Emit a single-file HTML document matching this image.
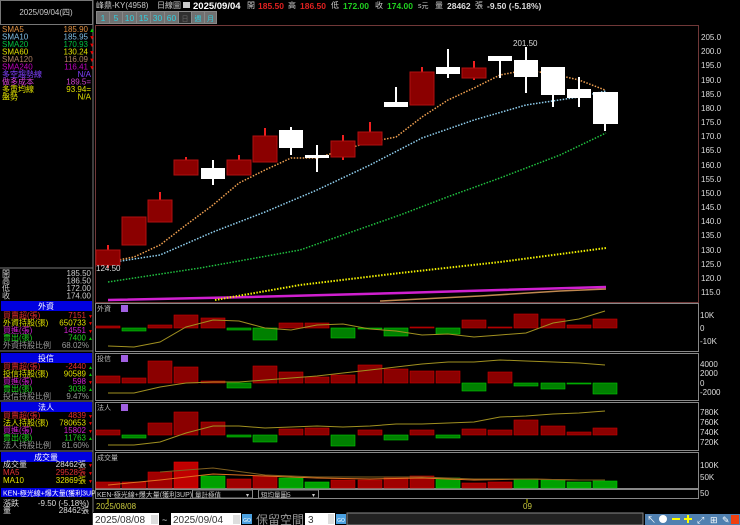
<!DOCTYPE html>
<html><head><meta charset="utf-8"><style>
html,body{margin:0;padding:0;background:#000;width:740px;height:525px;overflow:hidden}
svg{display:block;font-family:"Liberation Sans","Noto Sans CJK TC",sans-serif}
</style></head><body>
<svg width="740" height="525" viewBox="0 0 740 525" xmlns="http://www.w3.org/2000/svg">
<rect width="740" height="525" fill="#000"/>
<!-- left panel borders -->
<rect x="0.5" y="0.5" width="92" height="24" fill="#000" stroke="#777"/>
<text x="46" y="15" fill="#ccc" font-size="8" text-anchor="middle">2025/09/04(四)</text>
<line x1="93" y1="0" x2="93" y2="525" stroke="#777"/>
<g font-size="8">
<text x="2" y="32" fill="#e09040">SMA5</text><text x="88" y="32" fill="#e09040" text-anchor="end">185.90</text><text x="89" y="32" fill="#0c0" font-size="6">▲</text>
<text x="2" y="39.5" fill="#80c0e8">SMA10</text><text x="88" y="39.5" fill="#80c0e8" text-anchor="end">185.95</text><text x="89" y="39.5" fill="#e00" font-size="6">▼</text>
<text x="2" y="47" fill="#00c040">SMA20</text><text x="88" y="47" fill="#00c040" text-anchor="end">170.93</text><text x="89" y="47" fill="#e00" font-size="6">▼</text>
<text x="2" y="54.5" fill="#e0e000">SMA60</text><text x="88" y="54.5" fill="#e0e000" text-anchor="end">130.24</text><text x="89" y="54.5" fill="#e00" font-size="6">▼</text>
<text x="2" y="62" fill="#b08060">SMA120</text><text x="88" y="62" fill="#b08060" text-anchor="end">116.09</text><text x="89" y="62" fill="#e00" font-size="6">▼</text>
<text x="2" y="69.5" fill="#c000c0">SMA240</text><text x="88" y="69.5" fill="#c000c0" text-anchor="end">116.41</text><text x="89" y="69.5" fill="#e00" font-size="6">▼</text>
<text x="2" y="77" fill="#8040ff">多空趨勢線</text><text x="91" y="77" fill="#8040ff" text-anchor="end">N/A</text>
<text x="2" y="84.5" fill="#d040d0">做多成本</text><text x="91" y="84.5" fill="#d040d0" text-anchor="end">189.5=</text>
<text x="2" y="92" fill="#e0e000">多重均線</text><text x="91" y="92" fill="#e0e000" text-anchor="end">93.94=</text>
<text x="2" y="99.5" fill="#e0e000">盤勢</text><text x="91" y="99.5" fill="#e0e000" text-anchor="end">N/A</text>
</g>
<line x1="0" y1="268" x2="93" y2="268" stroke="#777"/>
<g font-size="8" fill="#ccc">
<text x="2" y="276">開</text><text x="91" y="276" text-anchor="end">185.50</text>
<text x="2" y="283.5">高</text><text x="91" y="283.5" text-anchor="end">186.50</text>
<text x="2" y="291">低</text><text x="91" y="291" text-anchor="end">172.00</text>
<text x="2" y="298.5">收</text><text x="91" y="298.5" text-anchor="end">174.00</text>
</g>
<!-- institutional tables -->
<g font-size="8">
<rect x="1" y="301" width="91" height="10" fill="#0000e0"/><text x="46" y="309" fill="#fff" text-anchor="middle">外資</text>
<text x="3" y="318" fill="#e03030">買賣超(張)</text><text x="86" y="318" fill="#e03030" text-anchor="end">7151</text>
<text x="3" y="325.5" fill="#e0e000">外資持股(張)</text><text x="86" y="325.5" fill="#e0e000" text-anchor="end">650733</text>
<text x="3" y="333" fill="#d020d0">買進(張)</text><text x="86" y="333" fill="#d020d0" text-anchor="end">14551</text>
<text x="3" y="340.5" fill="#20d020">賣出(張)</text><text x="86" y="340.5" fill="#20d020" text-anchor="end">7400</text>
<text x="3" y="348" fill="#999">外資持股比例</text><text x="89" y="348" fill="#999" text-anchor="end">68.02%</text>
<line x1="0" y1="351" x2="93" y2="351" stroke="#777"/>
<rect x="1" y="353" width="91" height="10" fill="#0000e0"/><text x="46" y="361" fill="#fff" text-anchor="middle">投信</text>
<text x="3" y="369" fill="#e03030">買賣超(張)</text><text x="86" y="369" fill="#e03030" text-anchor="end">-2440</text>
<text x="3" y="376.5" fill="#e0e000">投信持股(張)</text><text x="86" y="376.5" fill="#e0e000" text-anchor="end">90589</text>
<text x="3" y="384" fill="#d020d0">買進(張)</text><text x="86" y="384" fill="#d020d0" text-anchor="end">598</text>
<text x="3" y="391.5" fill="#20d020">賣出(張)</text><text x="86" y="391.5" fill="#20d020" text-anchor="end">3038</text>
<text x="3" y="399" fill="#999">投信持股比例</text><text x="89" y="399" fill="#999" text-anchor="end">9.47%</text>
<line x1="0" y1="401" x2="93" y2="401" stroke="#777"/>
<rect x="1" y="402" width="91" height="10" fill="#0000e0"/><text x="46" y="410" fill="#fff" text-anchor="middle">法人</text>
<text x="3" y="418" fill="#e03030">買賣超(張)</text><text x="86" y="418" fill="#e03030" text-anchor="end">4839</text>
<text x="3" y="425.5" fill="#e0e000">法人持股(張)</text><text x="86" y="425.5" fill="#e0e000" text-anchor="end">780653</text>
<text x="3" y="433" fill="#d020d0">買進(張)</text><text x="86" y="433" fill="#d020d0" text-anchor="end">15802</text>
<text x="3" y="440.5" fill="#20d020">賣出(張)</text><text x="86" y="440.5" fill="#20d020" text-anchor="end">11763</text>
<text x="3" y="448" fill="#999">法人持股比例</text><text x="89" y="448" fill="#999" text-anchor="end">81.60%</text>
<line x1="0" y1="451" x2="93" y2="451" stroke="#777"/>
<rect x="1" y="452" width="91" height="10" fill="#0000e0"/><text x="46" y="460" fill="#fff" text-anchor="middle">成交量</text>
<text x="3" y="467" fill="#ddd">成交量</text><text x="86" y="467" fill="#ddd" text-anchor="end">28462張</text>
<text x="3" y="475" fill="#e03030">MA5</text><text x="86" y="475" fill="#e03030" text-anchor="end">29528張</text>
<text x="3" y="483" fill="#e0e000">MA10</text><text x="86" y="483" fill="#e0e000" text-anchor="end">32869張</text>
<rect x="1" y="488" width="91" height="9" fill="#0000e0"/><text x="3" y="495.5" fill="#fff" font-size="7">KEN-極光線+爆大量(獲利3UP)</text>
<text x="3" y="506" fill="#ddd">漲跌</text><text x="89" y="506" fill="#ddd" text-anchor="end">-9.50 (-5.18%)</text>
<text x="3" y="513" fill="#ddd">量</text><text x="89" y="513" fill="#ddd" text-anchor="end">28462張</text>
</g>
<g font-size="5" fill="#e00"><text x="88" y="318">▼</text><text x="88" y="325">▼</text><text x="88" y="333">▼</text><text x="88" y="340" fill="#0c0">▲</text>
<text x="88" y="369" fill="#0c0">▲</text><text x="88" y="376" fill="#0c0">▲</text><text x="88" y="384">▼</text><text x="88" y="391" fill="#0c0">▲</text>
<text x="88" y="418">▼</text><text x="88" y="425">▼</text><text x="88" y="433">▼</text><text x="88" y="440" fill="#0c0">▲</text>
<text x="88" y="467">▼</text><text x="88" y="475">▼</text><text x="88" y="483">▼</text></g>

<!-- top header -->
<g font-size="8.5">
<text x="96" y="8" fill="#ccc" font-size="8">峰鼎-KY(4958)</text>
<text x="157" y="8" fill="#ccc" font-size="8">日線圖</text>
<rect x="183" y="2" width="7" height="6" fill="#ccc"/>
<text x="193" y="9" fill="#fff" font-weight="bold" font-size="9.5">2025/09/04</text>
<text x="247" y="8" fill="#ccc" font-size="8">開</text><text x="258" y="9" fill="#e02020" font-weight="bold">185.50</text>
<text x="288" y="8" fill="#ccc" font-size="8">高</text><text x="300" y="9" fill="#e02020" font-weight="bold">186.50</text>
<text x="331" y="8" fill="#ccc" font-size="8">低</text><text x="343" y="9" fill="#20d020" font-weight="bold">172.00</text>
<text x="375" y="8" fill="#ccc" font-size="8">收</text><text x="387" y="9" fill="#20d020" font-weight="bold">174.00</text>
<text x="418" y="8" fill="#ccc" font-size="7">s元</text>
<text x="435" y="8" fill="#ccc" font-size="8">量</text><text x="447" y="9" fill="#ddd" font-weight="bold">28462</text><text x="475" y="8" fill="#ccc" font-size="8">張</text>
<text x="487" y="9" fill="#ddd" font-weight="bold">-9.50 (-5.18%)</text>
</g>
<g font-size="8.5" fill="#30d0e0" text-anchor="middle">
<rect x="96" y="11" width="121" height="13" fill="#888"/>
<rect x="97" y="12" width="12" height="11" fill="#707070"/><text x="103" y="21">1</text>
<rect x="110" y="12" width="12" height="11" fill="#707070"/><text x="116" y="21">5</text>
<rect x="123" y="12" width="13" height="11" fill="#707070"/><text x="129.5" y="21">10</text>
<rect x="137" y="12" width="13" height="11" fill="#707070"/><text x="143.5" y="21">15</text>
<rect x="151" y="12" width="13" height="11" fill="#707070"/><text x="157.5" y="21">30</text>
<rect x="165" y="12" width="13" height="11" fill="#707070"/><text x="171.5" y="21">60</text>
<rect x="179" y="12" width="12" height="11" fill="#303030"/><text x="185" y="21" fill="#666" font-size="7">日</text>
<rect x="192" y="12" width="12" height="11" fill="#707070"/><text x="198" y="21" font-size="7">週</text>
<rect x="205" y="12" width="11" height="11" fill="#707070"/><text x="210.5" y="21" font-size="7">月</text>
</g>

<!-- main chart frame -->
<rect x="95.5" y="25.5" width="603" height="277" fill="none" stroke="#703838"/>
<g font-size="8" fill="#ddd">
<text x="701" y="40">205.0</text><text x="701" y="54">200.0</text><text x="701" y="68">195.0</text><text x="701" y="83">190.0</text><text x="701" y="97">185.0</text><text x="701" y="111">180.0</text><text x="701" y="125">175.0</text><text x="701" y="139">170.0</text><text x="701" y="153">165.0</text><text x="701" y="168">160.0</text><text x="701" y="182">155.0</text><text x="701" y="196">150.0</text><text x="701" y="210">145.0</text><text x="701" y="224">140.0</text><text x="701" y="238">135.0</text><text x="701" y="253">130.0</text><text x="701" y="267">125.0</text><text x="701" y="281">120.0</text><text x="701" y="295">115.0</text>
</g>
<!-- MA lines -->
<polyline points="108,300 250,297 400,293 500,290 606,287" fill="none" stroke="#d020d0" stroke-width="2.5"/>
<polyline points="380,301 480,296 560,291 606,289" fill="none" stroke="#c08850" stroke-width="1.5"/>
<polyline points="215,300 300,285 400,273 500,262 606,248" fill="none" stroke="#f0f000" stroke-width="2" stroke-dasharray="1.5 1.5"/>
<polyline points="108,282 200,268 300,250 400,215 450,196 500,178 560,155 606,133" fill="none" stroke="#20c040" stroke-width="1.5" stroke-dasharray="1.5 1.5"/>
<polyline points="108,263 160,255 213,232 265,212 317,190 370,165 422,138 474,120 526,105 579,97 606,91" fill="none" stroke="#90d0f0" stroke-width="1.5" stroke-dasharray="1.5 1.5"/>
<polyline points="108,262 134,257 160,245 186,225 213,205 239,183 265,170 291,158 317,158 343,150 370,142 396,137 422,117 448,100 474,88 500,75 526,70 553,74 579,80 605,90" fill="none" stroke="#f0a050" stroke-width="1.5" stroke-dasharray="1.5 1.5"/>
<!-- candles -->
<g stroke-width="2">
<line x1="108" y1="245" x2="108" y2="268" stroke="#f02020"/><rect x="96" y="250" width="24" height="15" fill="#8b0000" stroke="#b01010" stroke-width="1"/>
<rect x="122" y="217" width="24" height="28" fill="#8b0000" stroke="#b01010" stroke-width="1"/>
<line x1="160" y1="192" x2="160" y2="222" stroke="#f02020"/><rect x="148" y="200" width="24" height="22" fill="#8b0000" stroke="#b01010" stroke-width="1"/>
<line x1="186" y1="157" x2="186" y2="175" stroke="#f02020"/><rect x="174" y="160" width="24" height="15" fill="#8b0000" stroke="#b01010" stroke-width="1"/>
<line x1="213" y1="160" x2="213" y2="185" stroke="#fff"/><rect x="201" y="168" width="24" height="11" fill="#fff"/>
<line x1="239" y1="155" x2="239" y2="175" stroke="#f02020"/><rect x="227" y="160" width="24" height="15" fill="#8b0000" stroke="#b01010" stroke-width="1"/>
<line x1="265" y1="128" x2="265" y2="162" stroke="#f02020"/><rect x="253" y="136" width="24" height="26" fill="#8b0000" stroke="#b01010" stroke-width="1"/>
<line x1="291" y1="127" x2="291" y2="155" stroke="#fff"/><rect x="279" y="130" width="24" height="18" fill="#fff"/>
<line x1="317" y1="145" x2="317" y2="172" stroke="#fff"/><rect x="305" y="155" width="24" height="3" fill="#fff"/>
<line x1="343" y1="135" x2="343" y2="160" stroke="#f02020"/><rect x="331" y="141" width="24" height="16" fill="#8b0000" stroke="#b01010" stroke-width="1"/>
<line x1="370" y1="122" x2="370" y2="145" stroke="#f02020"/><rect x="358" y="132" width="24" height="13" fill="#8b0000" stroke="#b01010" stroke-width="1"/>
<line x1="396" y1="87" x2="396" y2="107" stroke="#fff"/><rect x="384" y="102" width="24" height="5" fill="#fff"/>
<line x1="422" y1="67" x2="422" y2="105" stroke="#f02020"/><rect x="410" y="72" width="24" height="33" fill="#8b0000" stroke="#b01010" stroke-width="1"/>
<line x1="448" y1="49" x2="448" y2="78" stroke="#fff"/><rect x="436" y="67" width="24" height="7" fill="#fff"/>
<line x1="474" y1="61" x2="474" y2="80" stroke="#f02020"/><rect x="462" y="68" width="24" height="10" fill="#8b0000" stroke="#b01010" stroke-width="1"/>
<line x1="500" y1="56" x2="500" y2="78" stroke="#fff"/><rect x="488" y="56" width="24" height="5" fill="#fff"/>
<line x1="526" y1="47" x2="526" y2="93" stroke="#fff"/><rect x="514" y="60" width="24" height="17" fill="#fff"/>
<line x1="553" y1="67" x2="553" y2="107" stroke="#fff"/><rect x="541" y="67" width="24" height="28" fill="#fff"/>
<line x1="579" y1="77" x2="579" y2="107" stroke="#fff"/><rect x="567" y="89" width="24" height="9" fill="#fff"/>
<line x1="605" y1="92" x2="605" y2="131" stroke="#fff"/><rect x="593" y="92" width="25" height="32" fill="#fff"/>
</g>
<text x="513" y="46" fill="#ddd" font-size="8">201.50</text>
<text x="96" y="271" fill="#ddd" font-size="8">124.50</text>

<!-- indicator panels -->
<g fill="none" stroke="#888">
<rect x="95.5" y="303.5" width="603" height="48"/>
<rect x="95.5" y="353.5" width="603" height="47"/>
<rect x="95.5" y="402.5" width="603" height="48"/>
<rect x="95.5" y="452.5" width="603" height="36"/>
</g>
<g font-size="7" fill="#bbb"><text x="97" y="311">外資</text><text x="97" y="361">投信</text><text x="97" y="410">法人</text><text x="97" y="460">成交量</text></g>
<g fill="#a060e0"><rect x="121" y="305" width="7" height="7"/><rect x="121" y="355" width="7" height="7"/><rect x="121" y="404" width="7" height="7"/></g>
<g font-size="8" fill="#ddd">
<text x="700" y="318">10K</text><text x="700" y="331">0</text><text x="700" y="344">-10K</text>
<text x="700" y="367">4000</text><text x="700" y="376">2000</text><text x="700" y="386">0</text><text x="700" y="395">-2000</text>
<text x="700" y="415">780K</text><text x="700" y="425">760K</text><text x="700" y="435">740K</text><text x="700" y="445">720K</text>
<text x="700" y="468">100K</text><text x="700" y="480">50K</text><text x="700" y="496">50</text>
</g>
<!-- 外資 bars -->
<g stroke-width="0.6">
<rect x="96" y="326" width="24" height="2" fill="#8b0000" stroke="#c00"/>
<rect x="122" y="328" width="24" height="3" fill="#008000" stroke="#0c0"/>
<rect x="148" y="325" width="24" height="3" fill="#8b0000" stroke="#c00"/>
<rect x="174" y="315" width="24" height="13" fill="#8b0000" stroke="#c00"/>
<rect x="201" y="318" width="24" height="10" fill="#8b0000" stroke="#c00"/>
<rect x="227" y="328" width="24" height="2" fill="#008000" stroke="#0c0"/>
<rect x="253" y="328" width="24" height="12" fill="#008000" stroke="#0c0"/>
<rect x="279" y="323" width="24" height="5" fill="#8b0000" stroke="#c00"/>
<rect x="305" y="323" width="24" height="5" fill="#8b0000" stroke="#c00"/>
<rect x="331" y="328" width="24" height="10" fill="#008000" stroke="#0c0"/>
<rect x="358" y="328" width="24" height="1" fill="#008000" stroke="#0c0"/>
<rect x="384" y="328" width="24" height="8" fill="#008000" stroke="#0c0"/>
<rect x="410" y="327" width="24" height="1" fill="#8b0000" stroke="#c00"/>
<rect x="436" y="328" width="24" height="6" fill="#008000" stroke="#0c0"/>
<rect x="462" y="320" width="24" height="8" fill="#8b0000" stroke="#c00"/>
<rect x="488" y="327" width="24" height="1" fill="#8b0000" stroke="#c00"/>
<rect x="514" y="314" width="24" height="14" fill="#8b0000" stroke="#c00"/>
<rect x="541" y="319" width="24" height="9" fill="#8b0000" stroke="#c00"/>
<rect x="567" y="325" width="24" height="3" fill="#8b0000" stroke="#c00"/>
<rect x="593" y="319" width="24" height="9" fill="#8b0000" stroke="#c00"/>
</g>
<polyline points="108,346 134,347 160,342 186,327 213,320 239,321 265,328 291,330 317,325 343,324 370,329 396,331 422,335 448,334 474,337 500,335 526,333 553,323 579,319 605,311" fill="none" stroke="#a09020" stroke-width="1"/>
<!-- 投信 bars -->
<g stroke-width="0.6">
<rect x="96" y="376" width="24" height="7" fill="#8b0000" stroke="#c00"/>
<rect x="122" y="378" width="24" height="5" fill="#8b0000" stroke="#c00"/>
<rect x="148" y="361" width="24" height="22" fill="#8b0000" stroke="#c00"/>
<rect x="174" y="367" width="24" height="16" fill="#8b0000" stroke="#c00"/>
<rect x="201" y="381" width="24" height="2" fill="#8b0000" stroke="#c00"/>
<rect x="227" y="383" width="24" height="5" fill="#008000" stroke="#0c0"/>
<rect x="253" y="366" width="24" height="17" fill="#8b0000" stroke="#c00"/>
<rect x="279" y="372" width="24" height="11" fill="#8b0000" stroke="#c00"/>
<rect x="305" y="377" width="24" height="6" fill="#8b0000" stroke="#c00"/>
<rect x="331" y="375" width="24" height="8" fill="#8b0000" stroke="#c00"/>
<rect x="358" y="365" width="24" height="18" fill="#8b0000" stroke="#c00"/>
<rect x="384" y="369" width="24" height="14" fill="#8b0000" stroke="#c00"/>
<rect x="410" y="371" width="24" height="12" fill="#8b0000" stroke="#c00"/>
<rect x="436" y="371" width="24" height="12" fill="#8b0000" stroke="#c00"/>
<rect x="462" y="383" width="24" height="8" fill="#008000" stroke="#0c0"/>
<rect x="488" y="372" width="24" height="11" fill="#8b0000" stroke="#c00"/>
<rect x="514" y="383" width="24" height="3" fill="#008000" stroke="#0c0"/>
<rect x="541" y="383" width="24" height="6" fill="#008000" stroke="#0c0"/>
<rect x="567" y="383" width="24" height="1" fill="#008000" stroke="#0c0"/>
<rect x="593" y="383" width="24" height="11" fill="#008000" stroke="#0c0"/>
</g>
<polyline points="108,393 134,393 160,387 186,383 213,382 239,382 265,380 291,378 317,376 343,373 370,370 396,367 422,364 448,362 474,362 500,360 526,361 553,362 579,363 605,365" fill="none" stroke="#a09020" stroke-width="1"/>
<!-- 法人 bars -->
<g stroke-width="0.6">
<rect x="96" y="430" width="24" height="5" fill="#8b0000" stroke="#c00"/>
<rect x="122" y="435" width="24" height="3" fill="#008000" stroke="#0c0"/>
<rect x="148" y="423" width="24" height="12" fill="#8b0000" stroke="#c00"/>
<rect x="174" y="412" width="24" height="23" fill="#8b0000" stroke="#c00"/>
<rect x="201" y="422" width="24" height="13" fill="#8b0000" stroke="#c00"/>
<rect x="227" y="435" width="24" height="2" fill="#008000" stroke="#0c0"/>
<rect x="253" y="435" width="24" height="7" fill="#008000" stroke="#0c0"/>
<rect x="279" y="429" width="24" height="6" fill="#8b0000" stroke="#c00"/>
<rect x="305" y="428" width="24" height="7" fill="#8b0000" stroke="#c00"/>
<rect x="331" y="435" width="24" height="11" fill="#008000" stroke="#0c0"/>
<rect x="358" y="430" width="24" height="5" fill="#8b0000" stroke="#c00"/>
<rect x="384" y="435" width="24" height="5" fill="#008000" stroke="#0c0"/>
<rect x="410" y="430" width="24" height="5" fill="#8b0000" stroke="#c00"/>
<rect x="436" y="435" width="24" height="3" fill="#008000" stroke="#0c0"/>
<rect x="462" y="429" width="24" height="6" fill="#8b0000" stroke="#c00"/>
<rect x="488" y="430" width="24" height="5" fill="#8b0000" stroke="#c00"/>
<rect x="514" y="420" width="24" height="15" fill="#8b0000" stroke="#c00"/>
<rect x="541" y="426" width="24" height="9" fill="#8b0000" stroke="#c00"/>
<rect x="567" y="432" width="24" height="3" fill="#8b0000" stroke="#c00"/>
<rect x="593" y="428" width="24" height="7" fill="#8b0000" stroke="#c00"/>
</g>
<polyline points="108,445 134,445 160,442 186,433 213,426 239,426 265,428 291,427 317,426 343,427 370,426 396,424 422,424 448,423 474,422 500,417 526,416 553,414 579,413 605,411" fill="none" stroke="#a09020" stroke-width="1"/>
<!-- volume -->
<g stroke-width="0.6">
<rect x="96" y="482" width="24" height="6" fill="#a00000" stroke="#c00"/>
<rect x="122" y="482" width="24" height="6" fill="#a00000" stroke="#c00"/>
<rect x="148" y="472" width="24" height="16" fill="#a00000" stroke="#c00"/>
<rect x="174" y="462" width="24" height="26" fill="#c00000" stroke="#e00"/>
<rect x="201" y="476" width="24" height="12" fill="#00a000" stroke="#0c0"/>
<rect x="227" y="479" width="24" height="9" fill="#a00000" stroke="#c00"/>
<rect x="253" y="476" width="24" height="12" fill="#a00000" stroke="#c00"/>
<rect x="279" y="478" width="24" height="10" fill="#00a000" stroke="#0c0"/>
<rect x="305" y="482" width="24" height="6" fill="#00a000" stroke="#0c0"/>
<rect x="331" y="480" width="24" height="8" fill="#a00000" stroke="#c00"/>
<rect x="358" y="480" width="24" height="8" fill="#a00000" stroke="#c00"/>
<rect x="384" y="478" width="24" height="10" fill="#a00000" stroke="#c00"/>
<rect x="410" y="476" width="24" height="12" fill="#a00000" stroke="#c00"/>
<rect x="436" y="478" width="24" height="10" fill="#00a000" stroke="#0c0"/>
<rect x="462" y="483" width="24" height="5" fill="#a00000" stroke="#c00"/>
<rect x="488" y="482" width="24" height="6" fill="#a00000" stroke="#c00"/>
<rect x="514" y="479" width="24" height="9" fill="#00a000" stroke="#0c0"/>
<rect x="541" y="480" width="24" height="8" fill="#00a000" stroke="#0c0"/>
<rect x="567" y="482" width="24" height="6" fill="#00a000" stroke="#0c0"/>
<rect x="593" y="481" width="24" height="7" fill="#00a000" stroke="#0c0"/>
</g>
<polyline points="108,485 160,480 213,474 265,476 317,478 370,479 422,478 474,480 526,479 579,480 605,480" fill="none" stroke="#e07020" stroke-width="1"/>
<polyline points="160,472 213,468 265,475 317,477 370,477 422,477 474,479 526,479 579,480 605,480" fill="none" stroke="#806020" stroke-width="1"/>

<!-- KEN dropdown row -->
<rect x="95.5" y="489.5" width="603" height="9" fill="#000" stroke="#888"/>
<text x="97" y="497" fill="#ccc" font-size="7">KEN-極光線+爆大量(獲利3UP)</text>
<rect x="192.5" y="490" width="60" height="8" fill="#000" stroke="#888"/><text x="195" y="497" fill="#ccc" font-size="6.5">量計極值</text><text x="246" y="497" fill="#ccc" font-size="6">▾</text>
<rect x="258.5" y="490" width="60" height="8" fill="#000" stroke="#888"/><text x="261" y="497" fill="#ccc" font-size="6.5">短均量圖5</text><text x="312" y="497" fill="#ccc" font-size="6">▾</text>
<!-- date axis -->
<line x1="108" y1="499" x2="108" y2="503" stroke="#cc0"/><text x="96" y="509" fill="#cccc40" font-size="8">2025/08/08</text>
<line x1="527" y1="499" x2="527" y2="503" stroke="#cc0"/><text x="523" y="509" fill="#cccc40" font-size="8">09</text>
<!-- bottom toolbar -->
<rect x="93" y="512" width="647" height="13" fill="#000"/>
<rect x="93" y="513" width="66" height="12" fill="#fff"/><text x="95" y="523" fill="#333" font-size="10">2025/08/08</text>
<rect x="151" y="515" width="7" height="9" fill="#ddd"/>
<text x="162" y="523" fill="#ddd" font-size="9">~</text>
<rect x="171" y="513" width="70" height="12" fill="#fff"/><text x="173" y="523" fill="#333" font-size="10">2025/09/04</text>
<rect x="233" y="515" width="7" height="9" fill="#ddd"/>
<rect x="242" y="514" width="10" height="10" fill="#4aa0e0"/><text x="247" y="522" fill="#fff" font-size="5" text-anchor="middle">GO</text>
<text x="256" y="524" fill="#999" font-size="12">保留空間</text>
<rect x="305" y="513" width="30" height="12" fill="#fff"/><text x="308" y="523" fill="#333" font-size="10">3</text>
<rect x="328" y="514" width="6" height="10" fill="#ddd"/>
<rect x="336" y="514" width="10" height="10" fill="#4aa0e0"/><text x="341" y="522" fill="#fff" font-size="5" text-anchor="middle">GO</text>
<rect x="347" y="513" width="296" height="12" fill="#222" stroke="#888"/>
<rect x="645" y="514" width="95" height="11" fill="#5080b0"/>
<g fill="#fff" font-size="9"><text x="647" y="523">↖</text><circle cx="663" cy="519" r="4" fill="#fff"/><rect x="672" y="518" width="8" height="2" fill="#ff0"/><rect x="684" y="518" width="8" height="2" fill="#ff0"/><rect x="687" y="515" width="2" height="8" fill="#ff0"/><text x="697" y="523">⤢</text><text x="710" y="523">⊞</text><text x="722" y="523">✎</text><rect x="731" y="515" width="8" height="9" fill="#f04010"/></g>
</svg>
</body></html>
